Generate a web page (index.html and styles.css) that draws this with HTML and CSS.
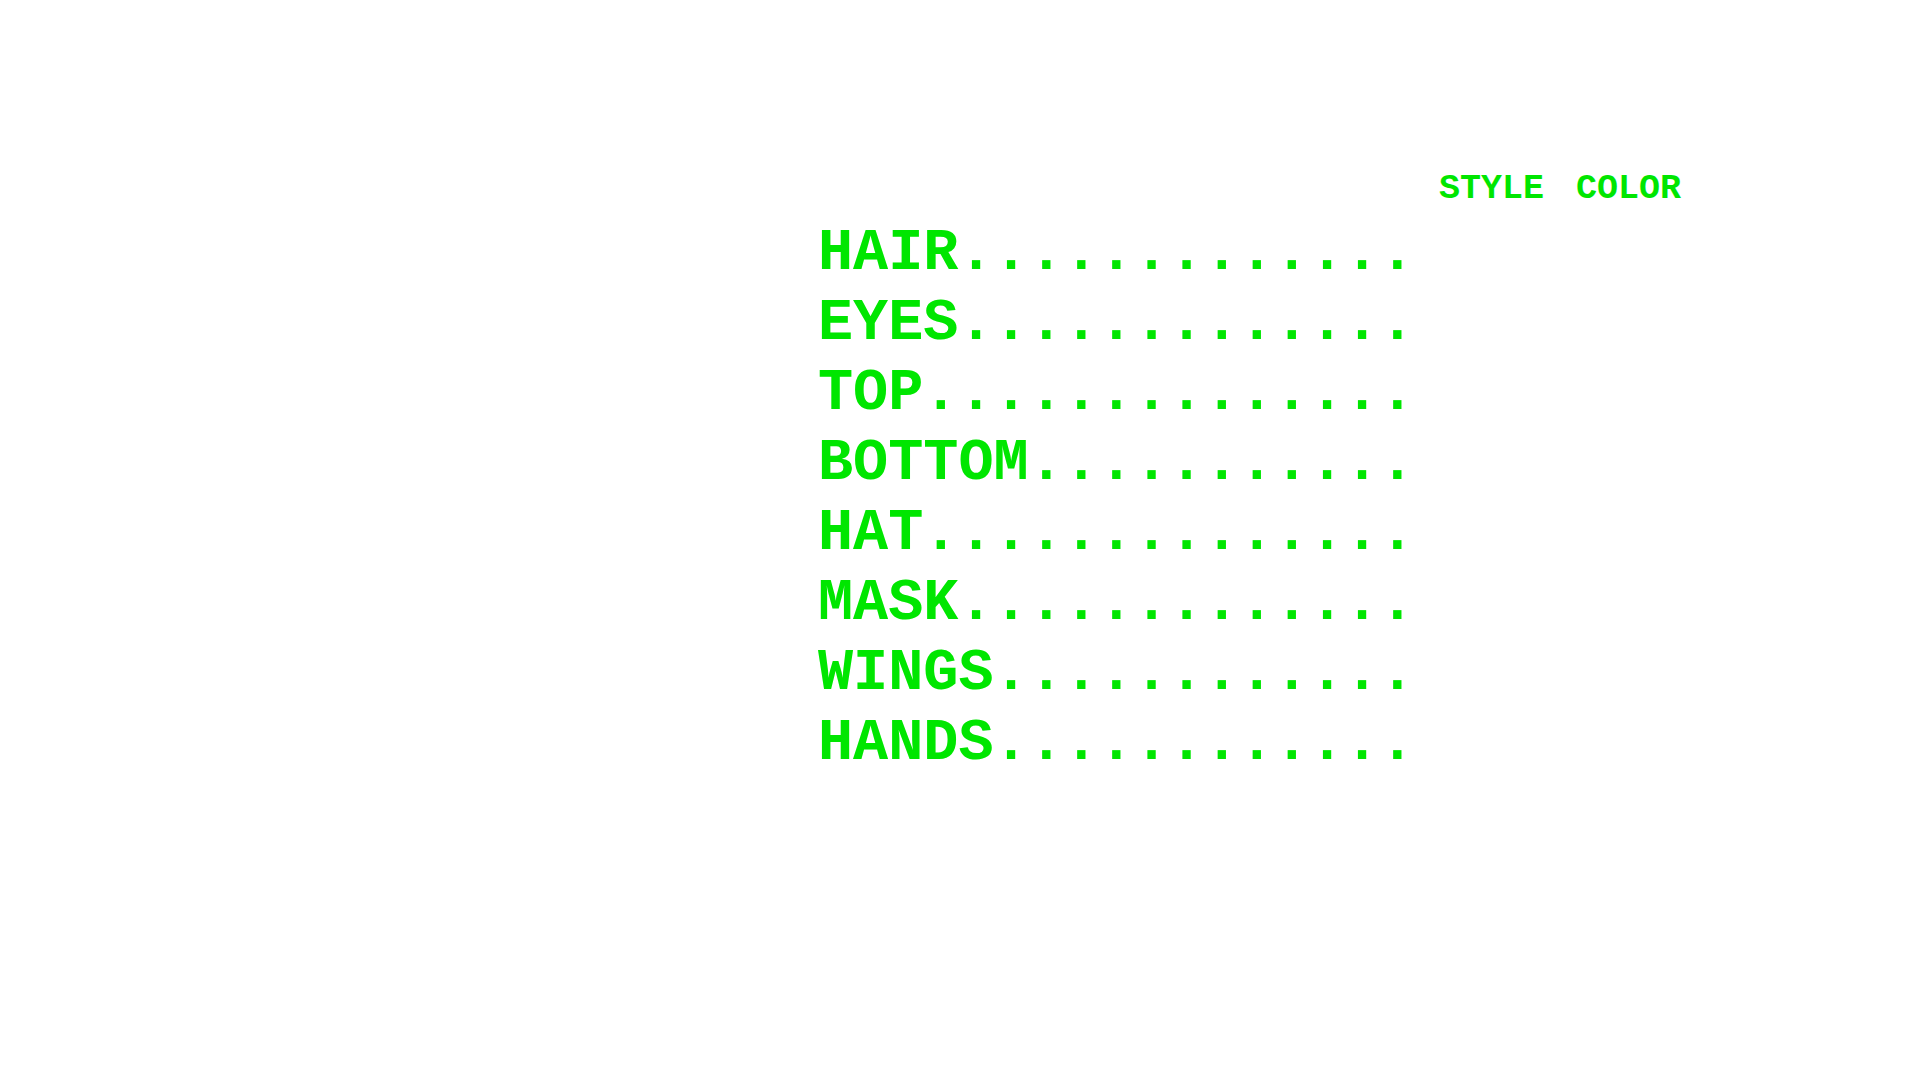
FILE: index.html
```html
<!DOCTYPE html>
<html lang="en">
<head>
<meta charset="utf-8">
<title>Character</title>
<link rel="stylesheet" href="styles.css">
</head>
<body>
<main class="menu">
  <div class="head"></div>
  <div class="head">STYLE</div>
  <div class="head">COLOR</div>

  <div class="label">HAIR.............</div><div class="cell"></div><div class="cell"></div>
  <div class="label">EYES.............</div><div class="cell"></div><div class="cell"></div>
  <div class="label">TOP..............</div><div class="cell"></div><div class="cell"></div>
  <div class="label">BOTTOM...........</div><div class="cell"></div><div class="cell"></div>
  <div class="label">HAT..............</div><div class="cell"></div><div class="cell"></div>
  <div class="label">MASK.............</div><div class="cell"></div><div class="cell"></div>
  <div class="label">WINGS............</div><div class="cell"></div><div class="cell"></div>
  <div class="label">HANDS............</div><div class="cell"></div><div class="cell"></div>
</main>
</body>
</html>
```

FILE: styles.css
```css
html, body {
  margin: 0;
  padding: 0;
  background: #ffffff;
}

body {
  width: 1920px;
  height: 1080px;
  overflow: hidden;
  font-family: "Courier New", "Nimbus Mono PS", "Nimbus Mono L", "FreeMono", "Liberation Mono", monospace;
  font-weight: bold;
  color: #00e600;
}

.menu {
  display: grid;
  grid-template-columns: 597px 113px auto;
  grid-template-rows: 50px;
  grid-auto-rows: 70px;
  column-gap: 24px;
  padding: 169px 0 0 818px;
}

.head {
  font-size: 35px;
  line-height: 40px;
  white-space: pre;
}

.label {
  font-size: 58.5px;
  line-height: 70px;
  white-space: pre;
}

.cell {
  min-height: 70px;
}
```
